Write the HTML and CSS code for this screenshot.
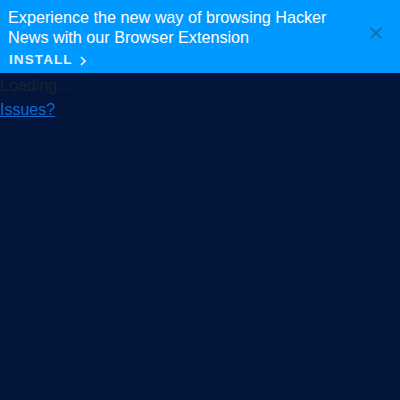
FILE: index.html
```html
<!DOCTYPE html>
<html>
<head>
<meta charset="utf-8">
<link rel="stylesheet" href="styles.css">
</head>
<body>
<div class="banner">
  <div class="banner-text">
    <div class="msg">Experience the new way of browsing Hacker News with our Browser Extension</div>
    <a class="install" href="#">INSTALL<svg class="chev" width="6" height="10" viewBox="0 0 6 10"><path d="M1 1L5 5L1 9" stroke="#e6f4ff" stroke-width="1.6" fill="none"/></svg></a>
  </div>
  <button class="close" aria-label="Close">
    <svg width="12" height="12" viewBox="0 0 12 12"><path d="M0.5 0.5L11.5 11.5M11.5 0.5L0.5 11.5" stroke="#1a6cae" stroke-width="1.8" fill="none"/></svg>
  </button>
</div>
<div class="content">
  <div class="loading">Loading...</div>
  <a class="issues" href="#">Issues?</a>
</div>
</body>
</html>
```
FILE: styles.css
```css
html, body { margin: 0; padding: 0; }
body {
  background: #03153a;
  font-family: "Liberation Sans", Arial, sans-serif;
  font-size: 16px;
  width: 400px;
  height: 400px;
}
.banner {
  box-sizing: border-box;
  background: #0099ff;
  display: flex;
  align-items: flex-start;
  justify-content: space-between;
  padding: 7px 18px 0 8px;
  height: 73px;
}
.banner-text { width: 330px; }
.msg {
  color: #ffffff;
  font-size: 16.2px;
  line-height: 20px;
}
.install {
  display: flex;
  align-items: center;
  margin-top: 5px;
  margin-left: 1px;
  color: #e6f4ff;
  font-weight: bold;
  font-size: 13.5px;
  line-height: 16px;
  letter-spacing: 1.1px;
  text-decoration: none;
}
.chev { margin-left: 7px; margin-top: 1px; }
.close {
  display: block;
  background: none;
  border: 0;
  padding: 0;
  margin-top: 20px;
  width: 12px;
  height: 12px;
}
.close svg { display: block; }
.content { padding-top: 1px; }
.loading { color: #1c2232; line-height: 24px; }
.issues { color: #0a6ad6; text-decoration: underline; line-height: 24px; }
```
